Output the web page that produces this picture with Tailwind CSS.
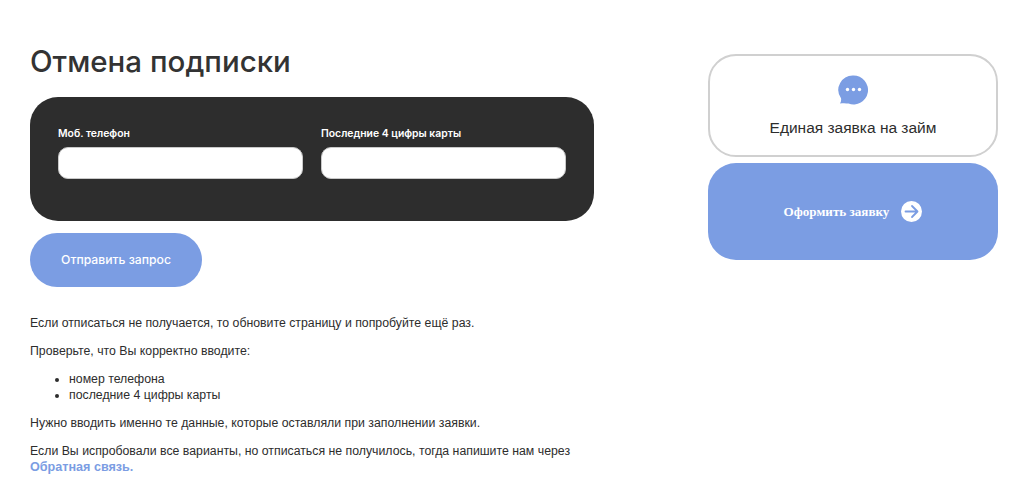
<!DOCTYPE html>
<html>
<head>
    <title>Отмена подписки</title>
    <script src="https://cdn.jsdelivr.net/npm/@tailwindcss/browser@4"></script>
</head>
<body class="bg-white font-['Liberation_Sans',sans-serif] text-[#2d2d2d] h-[487px] overflow-hidden">
<div class="flex items-start pl-[30px] pr-[26px]">
    <main class="w-[564px]">
        <h1 class="pt-[42px] text-[29.5px] leading-[38px] font-medium font-['Inter',sans-serif] text-[#333]">Отмена подписки</h1>
        <form class="mt-[17px] h-[124px] rounded-[28px] bg-[#2d2d2d] px-[28px] pt-[30px] grid grid-cols-2 gap-x-[18px]">
            <div>
                <label class="block text-[10.4px] leading-[13px] font-semibold text-white font-['Inter',sans-serif]">Моб. телефон</label>
                <input type="text" class="mt-[7px] block w-full h-[32px] rounded-[10px] bg-white border border-[#c9c9c9]">
            </div>
            <div>
                <label class="block text-[10.4px] leading-[13px] font-semibold text-white font-['Inter',sans-serif]">Последние 4 цифры карты</label>
                <input type="text" class="mt-[7px] block w-full h-[32px] rounded-[10px] bg-white border border-[#c9c9c9]">
            </div>
        </form>
        <button class="mt-[12px] block w-[172px] h-[54px] rounded-[27px] bg-[#7b9de3] text-white text-[12.2px] font-medium font-['Inter',sans-serif]">Отправить запрос</button>
        <div class="mt-[28px] text-[12.3px] leading-[16px]">
            <p>Если отписаться не получается, то обновите страницу и попробуйте ещё раз.</p>
            <p class="mt-[12px]">Проверьте, что Вы корректно вводите:</p>
            <ul class="mt-[12px] list-disc pl-[39px]">
                <li>номер телефона</li>
                <li>последние 4 цифры карты</li>
            </ul>
            <p class="mt-[12px]">Нужно вводить именно те данные, которые оставляли при заполнении заявки.</p>
            <p class="mt-[12px]">Если Вы испробовали все варианты, но отписаться не получилось, тогда напишите нам через <a href="#" class="block font-bold text-[12.6px] text-[#7b9de3]">Обратная связь.</a></p>
        </div>
    </main>
    <aside class="ml-auto w-[290px] pt-[54px]">
        <div class="h-[103px] rounded-[28px] border-2 border-[#d0d0d0] flex flex-col items-center pt-[19px]">
            <svg class="w-[30px] h-[30px]" viewBox="0 0 30 30">
                <path fill="#7b9de3" d="M15.5 .5a14.5 14.5 0 1 1-5 28.1c-2-.5-5.5-.7-8.5-.1 1-1.5 1.4-3.4 1-5.2A14.5 14.5 0 0 1 15.5 .5z"/>
                <circle cx="9.5" cy="14.5" r="1.7" fill="#fff"/>
                <circle cx="15.5" cy="14.5" r="1.7" fill="#fff"/>
                <circle cx="21.5" cy="14.5" r="1.7" fill="#fff"/>
            </svg>
            <div class="mt-[13px] text-[15.5px] leading-[20px]">Единая заявка на займ</div>
        </div>
        <a href="#" class="mt-[6px] h-[97px] rounded-[28px] bg-[#7b9de3] flex items-center justify-center gap-[12px] text-white">
            <span class="font-['Liberation_Serif',serif] font-bold text-[13.1px]">Оформить заявку</span>
            <svg class="w-[21px] h-[21px]" viewBox="0 0 21 21">
                <circle cx="10.5" cy="10.5" r="10.5" fill="#fff"/>
                <path d="M4.5 10.5h11.5M11 5l5.5 5.5-5.5 5.5" fill="none" stroke="#7b9de3" stroke-width="1.8" stroke-linecap="round" stroke-linejoin="round"/>
            </svg>
        </a>
    </aside>
</div>
</body>
</html>
